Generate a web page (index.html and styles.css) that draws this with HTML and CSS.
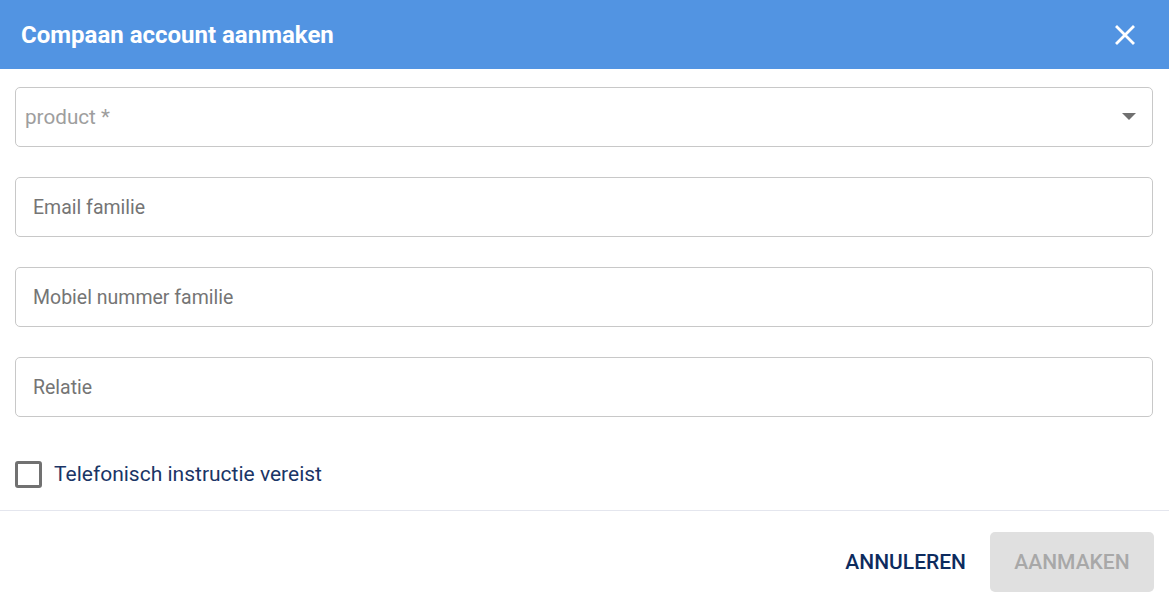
FILE: index.html
```html
<!DOCTYPE html>
<html>
<head>
<meta charset="utf-8">
<link rel="stylesheet" href="styles.css">
</head>
<body>
<div class="dialog">
  <header class="head">
    <h1 class="title">Compaan account aanmaken</h1>
    <button class="close" aria-label="Sluiten">
      <svg width="20" height="20" viewBox="0 0 20 20"><path d="M2 2 L18 18 M18 2 L2 18" stroke="#fff" stroke-width="2.8" stroke-linecap="square"/></svg>
    </button>
  </header>
  <main class="body">
    <div class="field select">
      <span class="ph ph-select">product *</span>
      <svg class="caret" width="14" height="8" viewBox="0 0 14 8"><path d="M0 0 H14 L7 7 Z" fill="#707070"/></svg>
    </div>
    <div class="field"><span class="ph">Email familie</span></div>
    <div class="field"><span class="ph">Mobiel nummer familie</span></div>
    <div class="field"><span class="ph">Relatie</span></div>
    <label class="check">
      <span class="box"></span>
      <span class="check-label">Telefonisch instructie vereist</span>
    </label>
  </main>
  <footer class="foot">
    <button class="btn btn-text">ANNULEREN</button>
    <button class="btn btn-disabled">AANMAKEN</button>
  </footer>
</div>
</body>
</html>
```
FILE: styles.css
```css
html, body { margin: 0; padding: 0; background: #fff; }
body { font-family: Roboto, "Noto Sans", Arial, sans-serif; }
.dialog { width: 1169px; height: 604px; display: flex; flex-direction: column; }
.head {
  height: 69px; background: #5294e2; display: flex; align-items: center;
  justify-content: space-between; padding: 0 34px 0 21px; box-sizing: border-box;
}
.title { margin: 0; color: #fff; font-size: 24px; font-weight: 700; letter-spacing: 0; }
.close { background: none; border: 0; padding: 0; width: 20px; height: 20px; display: flex; cursor: pointer; }
.body { padding: 18px 16px 0 15px; display: flex; flex-direction: column; gap: 30px; }
.field {
  height: 60px; border: 1px solid #c8c8c8; border-radius: 5px; box-sizing: border-box;
  display: flex; align-items: center; padding: 0 17px;
}
.ph { font-size: 19.5px; color: #757575; }
.select { padding: 0 16px 0 9px; justify-content: space-between; }
.ph-select { font-size: 20.7px; color: #9e9e9e; }
.check { display: flex; align-items: center; gap: 12px; margin-top: 14px; height: 26px; }
.box { width: 27px; height: 27px; box-sizing: border-box; border: 3px solid #717171; border-radius: 3px; }
.check-label { font-size: 21px; color: #1a3566; }
.foot {
  margin-top: 23px; border-top: 1px solid #e4e6ee; flex: 1; display: flex;
  justify-content: flex-end; align-items: flex-start; padding: 21px 15px 0 0; gap: 24px;
}
.btn { font-family: inherit; font-size: 21px; font-weight: 500; border: 0; background: none; letter-spacing: 0; }
.btn-text { color: #0d2b5e; padding: 0; height: 60px; }
.btn-disabled { background: #e0e0e0; color: #a8a8a8; border-radius: 5px; width: 164px; height: 60px; }
```
